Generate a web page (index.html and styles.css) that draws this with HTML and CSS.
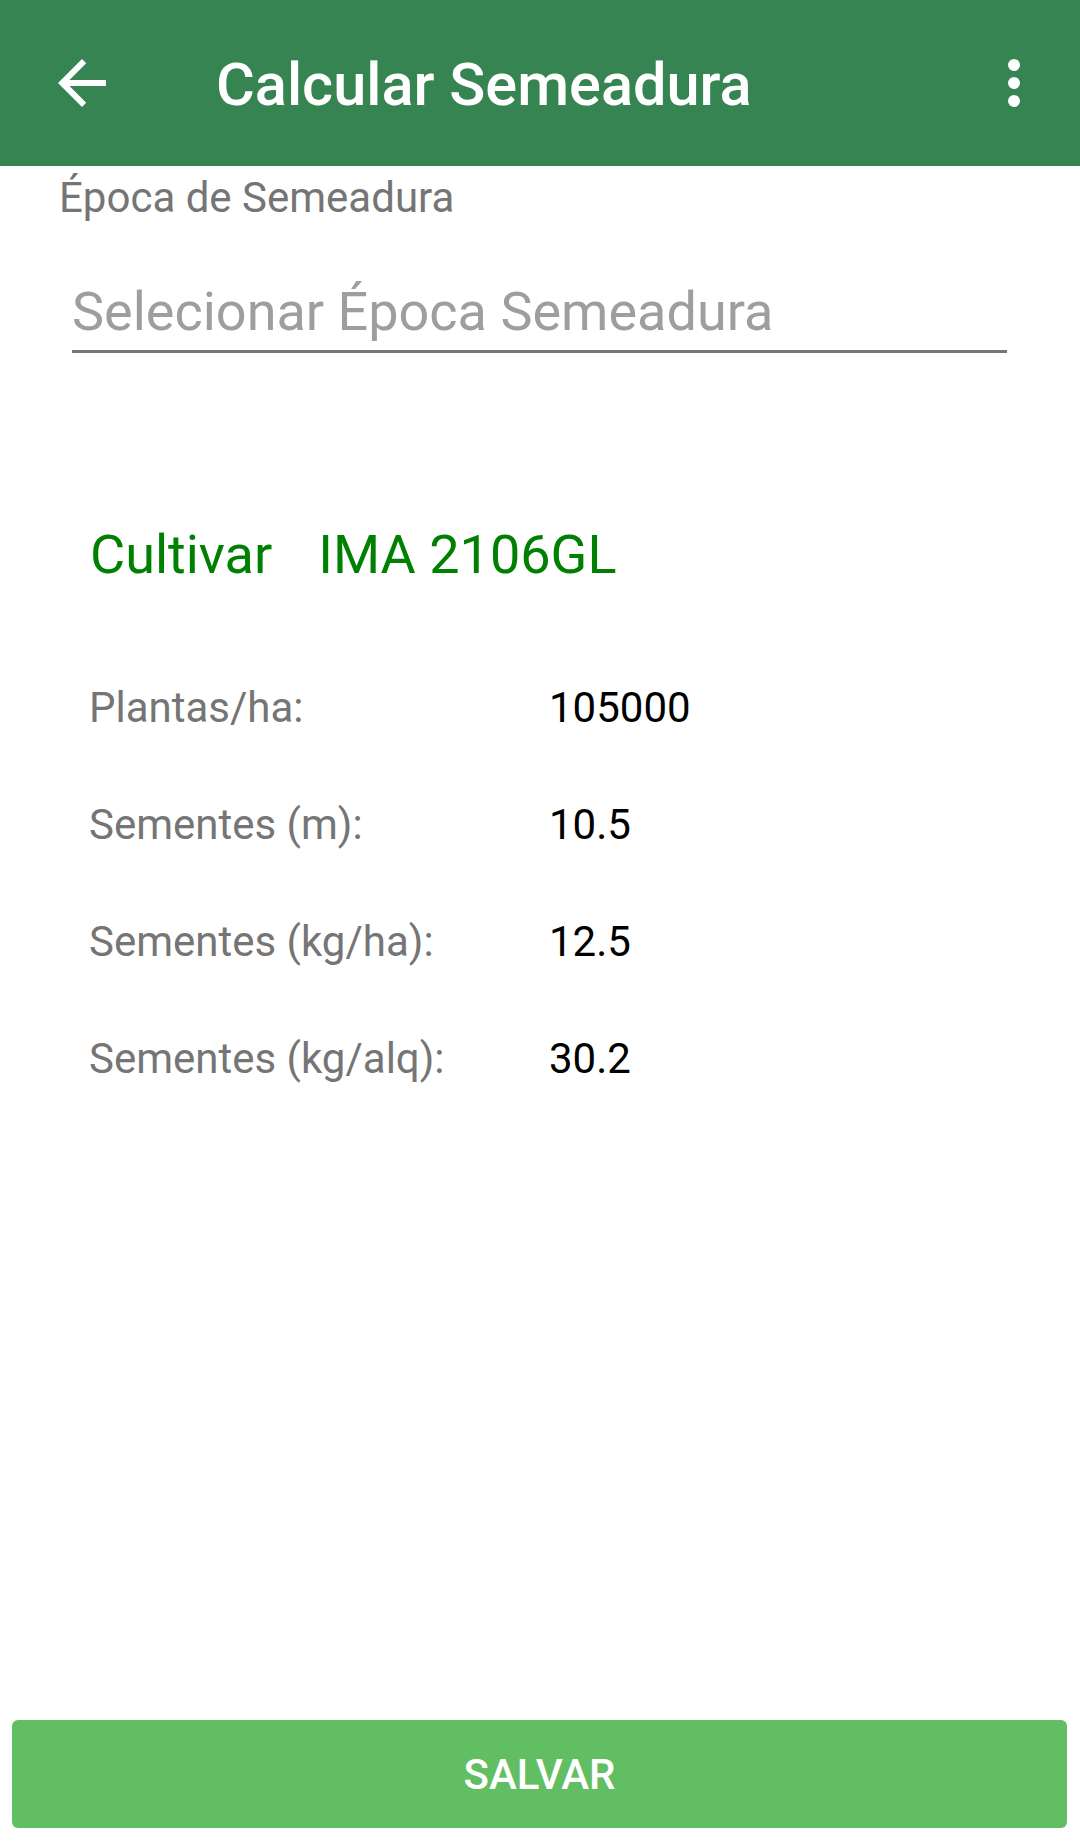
FILE: index.html
```html
<!DOCTYPE html>
<html lang="pt">
<head>
<meta charset="utf-8">
<title>Calcular Semeadura</title>
<link rel="stylesheet" href="styles.css">
</head>
<body>
<div class="app">
  <header class="toolbar">
    <span class="nav-icon">
      <svg viewBox="0 0 24 24" width="72" height="72"><path fill="#fff" d="M20 11H7.83l5.59-5.59L12 4l-8 8 8 8 1.41-1.41L7.83 13H20v-2z"/></svg>
    </span>
    <h1 class="title">Calcular Semeadura</h1>
    <span class="menu-icon">
      <svg viewBox="0 0 24 24" width="72" height="72"><circle cx="12" cy="6" r="2" fill="#fff"/><circle cx="12" cy="12" r="2" fill="#fff"/><circle cx="12" cy="18" r="2" fill="#fff"/></svg>
    </span>
  </header>
  <main class="content">
    <div class="field-label">Época de Semeadura</div>
    <div class="select">Selecionar Época Semeadura</div>
    <div class="cultivar">
      <span class="cultivar-label">Cultivar</span>
      <span class="cultivar-value">IMA 2106GL</span>
    </div>
    <div class="rows">
      <div class="row"><span class="row-label">Plantas/ha:</span><span class="row-value">105000</span></div>
      <div class="row"><span class="row-label">Sementes (m):</span><span class="row-value">10.5</span></div>
      <div class="row"><span class="row-label">Sementes (kg/ha):</span><span class="row-value">12.5</span></div>
      <div class="row"><span class="row-label">Sementes (kg/alq):</span><span class="row-value">30.2</span></div>
    </div>
  </main>
  <button class="save-btn">SALVAR</button>
</div>
</body>
</html>
```
FILE: styles.css
```css
html, body {
  margin: 0;
  padding: 0;
  background: #fff;
}
body {
  font-family: Roboto, "Noto Sans", sans-serif;
}
.app {
  width: 1080px;
  height: 1846px;
  display: flex;
  flex-direction: column;
}
.toolbar {
  height: 166px;
  flex: none;
  background: #378453;
  display: flex;
  align-items: center;
  padding: 0 30px 0 46px;
  box-sizing: border-box;
}
.nav-icon, .menu-icon {
  width: 72px;
  height: 72px;
  display: block;
  flex: none;
}
.nav-icon svg, .menu-icon svg {
  display: block;
}
.title {
  flex: 1;
  margin: 3px 0 0 98px;
  font-size: 59.5px;
  font-weight: 500;
  line-height: 72px;
  color: #fff;
}
.content {
  flex: 1;
}
.field-label {
  margin: 7px 0 0 59px;
  font-size: 42px;
  line-height: 50px;
  color: #757575;
}
.select {
  margin: 57px 0 0 72px;
  width: 935px;
  font-size: 54px;
  line-height: 64px;
  color: #9e9e9e;
  padding-bottom: 6px;
  border-bottom: 3px solid #777;
}
.cultivar {
  margin-top: 167px;
  padding-left: 90px;
  display: flex;
  gap: 46px;
  font-size: 54px;
  line-height: 70px;
  color: #008000;
}
.rows {
  margin-top: 59px;
  padding-left: 89px;
}
.row {
  display: grid;
  grid-template-columns: 460px auto;
  font-size: 42px;
  line-height: 117px;
}
.row-label {
  color: #757575;
}
.row-value {
  color: #000;
}
.save-btn {
  flex: none;
  margin: 0 13px 18px 12px;
  height: 108px;
  border: none;
  border-radius: 6px;
  background: #62be62;
  color: #fff;
  font-family: Roboto, "Noto Sans", sans-serif;
  font-size: 42px;
  font-weight: 500;
  display: flex;
  align-items: center;
  justify-content: center;
  padding: 0;
}
```
